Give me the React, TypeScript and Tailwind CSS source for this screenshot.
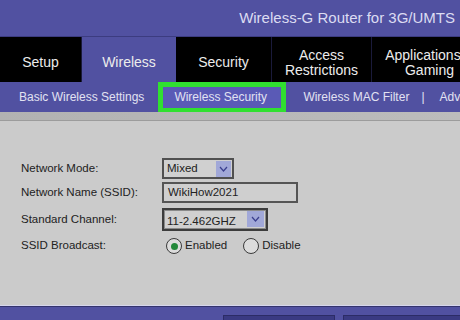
import React from "react";

const tabs = [
  { label: ["Setup"], w: "w-[82px]", active: false },
  { label: ["Wireless"], w: "w-[94px]", active: true },
  { label: ["Security"], w: "w-[96px]", active: false },
  { label: ["Access", "Restrictions"], w: "w-[100px]", active: false },
  { label: ["Applications &", "Gaming"], w: "w-[116px]", active: false },
];

function Chevron() {
  return (
    <svg width="9" height="6" viewBox="0 0 9 6" fill="none">
      <path d="M1 1 L4.5 5 L8 1" stroke="#3b3f8e" strokeWidth="1.2" />
    </svg>
  );
}

function Radio({ checked }: { checked?: boolean }) {
  return (
    <span className="flex h-[16px] w-[16px] shrink-0 items-center justify-center rounded-full border-[1.5px] border-[#3a3a3a] bg-[#dcdcdc]">
      {checked && <span className="h-[7px] w-[7px] rounded-full bg-[#23883a]" />}
    </span>
  );
}

export default function App() {
  return (
    <div
      className="flex h-[320px] w-[460px] flex-col overflow-hidden bg-[#cbcbcb]"
      style={{ fontFamily: '"Liberation Sans", Arial, sans-serif' }}
    >
      {/* banner */}
      <div className="flex h-[37px] shrink-0 items-center justify-end border-b border-[#3c3c80] bg-[#5151a1] pr-[5px]">
        <span className="text-[15px] text-[#dcdcf2]">Wireless-G Router for 3G/UMTS</span>
      </div>

      {/* main tabs */}
      <div className="flex h-[45px] shrink-0 bg-black">
        {tabs.map((t) => (
          <div
            key={t.label[0]}
            className={`${t.w} flex shrink-0 flex-col items-center justify-center pt-[6px] text-center text-[14px] leading-[15px] text-[#ececec] ${
              t.active ? "bg-[#5151a1]" : "border-r border-[#1a1a3a]"
            }`}
          >
            {t.label.map((l) => (
              <span key={l} className="whitespace-nowrap">
                {l}
              </span>
            ))}
          </div>
        ))}
      </div>

      {/* sub nav */}
      <div className="flex h-[30px] shrink-0 items-center whitespace-nowrap bg-[#5151a1] pl-[19px] text-[12px] text-[#e2e2f2]">
        <span className="shrink-0">Basic Wireless Settings</span>
        <div className="ml-[14px] flex h-[31px] w-[128px] shrink-0 items-center border-[5px] border-[#30e030] bg-[#5a5ab6] pl-[11px]">
          Wireless Security
        </div>
        <span className="ml-[17px] shrink-0">Wireless MAC Filter</span>
        <span className="ml-[12px] shrink-0">|</span>
        <span className="ml-[15px] shrink-0">Advanced Wireless Settings</span>
      </div>

      {/* grey strip */}
      <div className="h-[8px] shrink-0 bg-gradient-to-r from-[#b2b2b2] to-[#bcbcbc]" />
      <div className="h-[1px] shrink-0 bg-[#9c9c9c]" />

      {/* form */}
      <div className="flex flex-1 flex-col pl-[21px] text-[11.5px] text-[#222]">
        <div className="mt-[37px] flex h-[21px] items-center">
          <span className="w-[141px] shrink-0">Network Mode:</span>
          <div className="flex h-[21px] w-[72px] items-center justify-between border-2 border-[#505050] bg-[#d0d0d0] pl-[3px] pr-[1px]">
            <span>Mixed</span>
            <span className="flex h-[16px] w-[15px] items-center justify-center bg-[#a1a8d8]">
              <Chevron />
            </span>
          </div>
        </div>

        <div className="mt-[3px] flex h-[21px] items-center">
          <span className="w-[141px] shrink-0">Network Name (SSID):</span>
          <div className="flex h-[21px] w-[136px] items-center border-2 border-[#555] bg-[#cfcfcf] pl-[4px]">
            WikiHow2021
          </div>
        </div>

        <div className="mt-[5px] flex h-[23px] items-center">
          <span className="w-[141px] shrink-0">Standard Channel:</span>
          <div className="flex h-[23px] w-[106px] items-center justify-between border-2 border-[#3c3c3c] bg-[#d0d0d0] pl-[3px] pr-[2px] shadow-[inset_0_0_0_1px_#8a8a8a]">
            <span className="pt-[4px]">11-2.462GHZ</span>
            <span className="mt-[-2px] flex h-[16px] w-[17px] items-center justify-center bg-[#a1a8d8]">
              <Chevron />
            </span>
          </div>
        </div>

        <div className="mt-[7px] flex h-[16px] items-center">
          <span className="w-[145px] shrink-0">SSID Broadcast:</span>
          <Radio checked />
          <span className="ml-[3px]">Enabled</span>
          <span className="ml-[16px]">
            <Radio />
          </span>
          <span className="ml-[3px]">Disable</span>
        </div>
      </div>

      {/* footer */}
      <div className="h-[1px] shrink-0 bg-[#d6d6ee]" />
      <div className="h-[1px] shrink-0 bg-[#34346e]" />
      <div className="flex h-[13px] shrink-0 items-start bg-[#5151a1] pl-[223px] pt-[8px]">
        <div className="h-[22px] w-[112px] shrink-0 border border-[#2c2c66] bg-[#3a3a82] pt-[3px] text-center text-[12px] text-[#e0e0f0]">
          Save Settings
        </div>
        <div className="ml-[8px] h-[22px] w-[120px] shrink-0 border border-[#2c2c66] bg-[#3a3a82] pt-[3px] text-center text-[12px] text-[#e0e0f0]">
          Cancel Changes
        </div>
      </div>
    </div>
  );
}
